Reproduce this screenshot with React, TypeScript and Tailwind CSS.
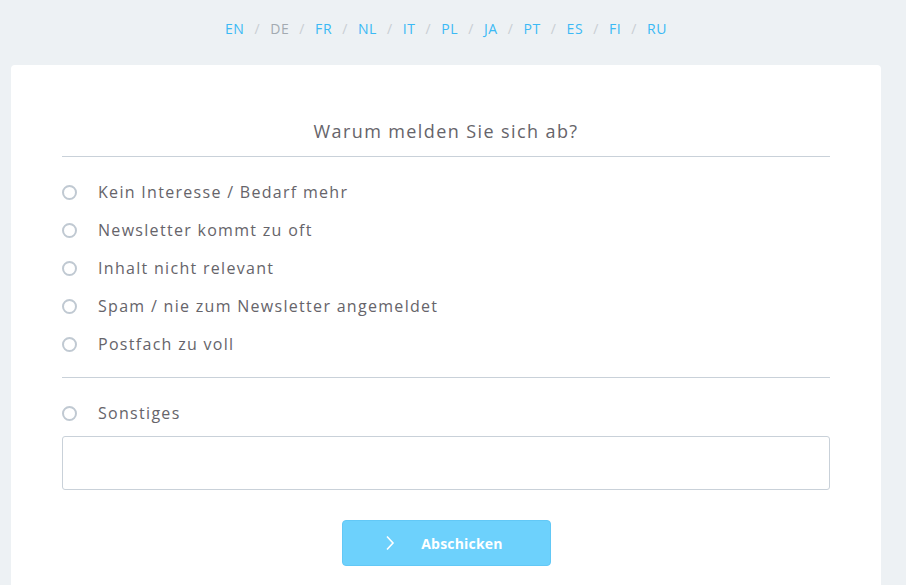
import { useState } from "react";

const langs = ["EN", "DE", "FR", "NL", "IT", "PL", "JA", "PT", "ES", "FI", "RU"];

const reasons = [
  "Kein Interesse / Bedarf mehr",
  "Newsletter kommt zu oft",
  "Inhalt nicht relevant",
  "Spam / nie zum Newsletter angemeldet",
  "Postfach zu voll",
];

function Radio({ label, checked, onClick }: { label: string; checked: boolean; onClick: () => void }) {
  return (
    <label className="flex items-center h-[38px] cursor-pointer" onClick={onClick}>
      <span className="w-[15px] h-[15px] rounded-full border-[2.5px] border-[#c0c9d2] flex items-center justify-center">
        {checked && <span className="w-[6px] h-[6px] rounded-full bg-[#3bb9f5]" />}
      </span>
      <span className="ml-[21px] text-[16px] tracking-[1.3px] text-[#66646a]">{label}</span>
    </label>
  );
}

export default function App() {
  const [choice, setChoice] = useState<number | null>(null);

  return (
    <div className="min-h-[585px] bg-[#edf1f4] font-['Open_Sans',sans-serif]">
      <div className="w-[892px]">
        <nav className="flex justify-center items-center h-[56px] pt-[1px] text-[14px] tracking-[0.6px]">
          {langs.map((l, i) => (
            <span key={l} className="flex items-center">
              {i > 0 && <span className="mx-[10px] text-[#c9ced3]">/</span>}
              <a className={l === "DE" ? "text-[#a3aab1]" : "text-[#3bb9f5]"}>{l}</a>
            </span>
          ))}
        </nav>

        <div className="mx-[11px] mt-[9px] bg-white rounded-t-[4px] px-[51px] pt-[50px] pb-[40px]">
          <h2 className="text-center text-[18px] tracking-[1.4px] text-[#66646a] leading-[32px]">
            Warum melden Sie sich ab?
          </h2>
          <div className="mt-[9px] border-t border-[#c9d1d9]" />

          <div className="pt-[16px] pb-[14px]">
            {reasons.map((r, i) => (
              <Radio key={r} label={r} checked={choice === i} onClick={() => setChoice(i)} />
            ))}
          </div>

          <div className="border-t border-[#c9d1d9]" />
          <div className="pt-[16px]">
            <Radio label="Sonstiges" checked={choice === 99} onClick={() => setChoice(99)} />
          </div>
          <input
            className="mt-[4px] block w-full h-[54px] border border-[#c9d1d9] rounded-[3px] px-3 outline-none"
            type="text"
          />

          <div className="flex justify-center mt-[30px]">
            <button className="relative w-[209px] h-[46px] rounded-[4px] bg-[#6dd1fc] border border-[#62c8f6] text-white text-[14px] font-bold tracking-[0.2px] flex items-center justify-center">
              <svg className="absolute left-[42px]" width="10" height="16" viewBox="0 0 10 16" fill="none">
                <path d="M2 1.5 L8 8 L2 14.5" stroke="white" strokeWidth="1.6" />
              </svg>
              <span className="ml-[32px]">Abschicken</span>
            </button>
          </div>
        </div>
      </div>
    </div>
  );
}
